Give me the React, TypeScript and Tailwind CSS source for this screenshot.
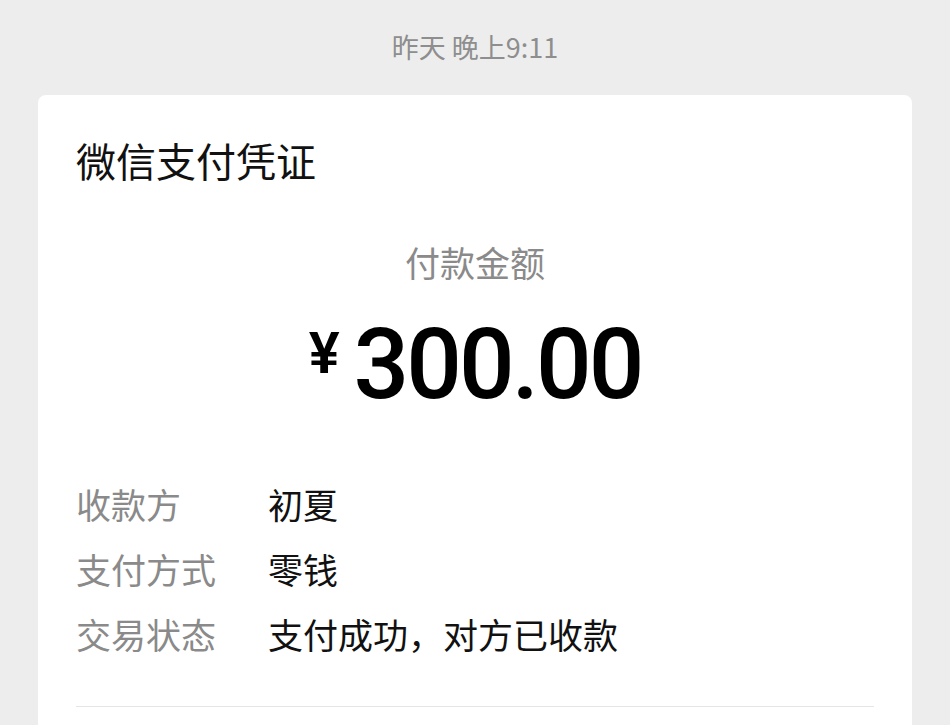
const rows = [
  { label: "收款方", value: "初夏" },
  { label: "支付方式", value: "零钱" },
  { label: "交易状态", value: "支付成功，对方已收款" },
];

const cjk = { fontFamily: '"Noto Sans CJK SC", "Noto Sans", sans-serif' };

export default function App() {
  return (
    <div className="h-[725px] w-[950px] overflow-hidden bg-[#ededed]" style={cjk}>
      {/* TIME */}
      <div className="pt-[29px] text-center text-[27px] leading-[36px] text-[#8e8e8e]">
        昨天 晚上9:11
      </div>

      {/* CARD */}
      <div className="mx-[38px] mt-[30px] h-[700px] rounded-lg bg-white px-[38px] pt-[40px]">
        <h1 className="text-[40px] leading-[50px] text-[#111]">微信支付凭证</h1>

        <div className="mt-[52px] text-center text-[35px] leading-[50px] text-[#8a8a8a]">付款金额</div>

        <div
          className="mt-[28px] flex items-start justify-center text-black"
          style={{ fontFamily: 'Roboto, "Liberation Sans", sans-serif' }}
        >
          <span className="mr-[14px] mt-[8px] text-[58px] font-semibold leading-[60px]">¥</span>
          <span className="text-[98px] font-medium leading-[100px] tracking-[-3px]">300.00</span>
        </div>

        {/* DETAILS */}
        <div className="mt-[56px] flex flex-col">
          {rows.map((r) => (
            <div key={r.label} className="flex text-[35px] leading-[65px]">
              <span className="w-[192px] text-[#8a8a8a]">{r.label}</span>
              <span className="text-[#111]">{r.value}</span>
            </div>
          ))}
        </div>

        <div className="mt-[40px] h-px bg-[#e5e5e5]" />
      </div>
    </div>
  );
}
